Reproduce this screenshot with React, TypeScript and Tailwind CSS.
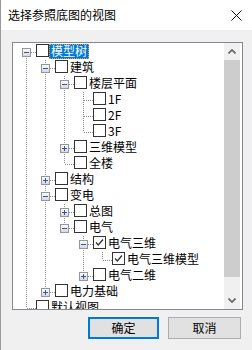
import React from "react";

type Row = { label: string; level: number; exp?: "minus" | "plus"; checked?: boolean; selected?: boolean };

const rows: Row[] = [
  { label: "模型树", level: 0, exp: "minus", selected: true },
  { label: "建筑", level: 1, exp: "minus" },
  { label: "楼层平面", level: 2, exp: "minus" },
  { label: "1F", level: 3 },
  { label: "2F", level: 3 },
  { label: "3F", level: 3 },
  { label: "三维模型", level: 2, exp: "plus" },
  { label: "全楼", level: 2 },
  { label: "结构", level: 1, exp: "plus" },
  { label: "变电", level: 1, exp: "minus" },
  { label: "总图", level: 2, exp: "plus" },
  { label: "电气", level: 2, exp: "minus" },
  { label: "电气三维", level: 3, exp: "minus", checked: true },
  { label: "电气三维模型", level: 4, checked: true },
  { label: "电气二维", level: 3, exp: "plus" },
  { label: "电力基础", level: 1, exp: "plus" },
  { label: "默认视图", level: 0 },
];

function hasNext(i: number): boolean {
  const L = rows[i].level;
  for (let j = i + 1; j < rows.length; j++) {
    if (rows[j].level < L) return false;
    if (rows[j].level === L) return true;
  }
  return false;
}

function ancestorContinues(i: number, c: number): boolean {
  for (let j = i - 1; j >= 0; j--) {
    if (rows[j].level === c) return hasNext(j);
  }
  return false;
}

const LINE = "#8f8f8f";

function Cell({ i, c }: { i: number; c: number }) {
  const row = rows[i];
  const own = c === row.level;
  return (
    <svg width="19" height="16" shapeRendering="crispEdges" className="shrink-0 block">
      <defs>
        <linearGradient id={`g${i}`} x1="0" y1="0" x2="0" y2="1">
          <stop offset="0" stopColor="#ffffff" />
          <stop offset="1" stopColor="#d6d6d6" />
        </linearGradient>
      </defs>
      {!own && ancestorContinues(i, c) && (
        <line x1="9.5" y1="0" x2="9.5" y2="16" stroke={LINE} strokeDasharray="1 1" />
      )}
      {own && (
        <>
          {i !== 0 && <line x1="9.5" y1="0" x2="9.5" y2="8" stroke={LINE} strokeDasharray="1 1" />}
          {hasNext(i) && <line x1="9.5" y1="8" x2="9.5" y2="16" stroke={LINE} strokeDasharray="1 1" />}
          <line x1="10" y1="8.5" x2="19" y2="8.5" stroke={LINE} strokeDasharray="1 1" />
          {row.exp && (
            <>
              <rect x="5.5" y="4.5" width="8" height="8" fill={`url(#g${i})`} stroke="#969696" />
              <line x1="7" y1="8.5" x2="12" y2="8.5" stroke="#2f55a6" />
              {row.exp === "plus" && <line x1="9.5" y1="6" x2="9.5" y2="11" stroke="#2f55a6" />}
            </>
          )}
        </>
      )}
    </svg>
  );
}

function Checkbox({ checked }: { checked?: boolean }) {
  return (
    <div className="w-[13px] h-[13px] shrink-0 border border-[#333333] bg-white flex items-center justify-center">
      {checked && (
        <svg width="11" height="11" viewBox="0 0 11 11">
          <polyline points="2,5.5 4.3,8 9,2.5" fill="none" stroke="#333333" strokeWidth="1.3" />
        </svg>
      )}
    </div>
  );
}

export default function App() {
  return (
    <div className="w-[252px] h-[350px] bg-[#f0f0f0] border-l border-[#9a9a9a] flex flex-col font-['Noto_Sans_CJK_SC','Microsoft_YaHei',sans-serif] text-black overflow-hidden">
      <div className="h-[30px] bg-white flex items-center justify-between pl-[7px] pr-[10px] shrink-0">
        <span className="text-[12px] leading-none">选择参照底图的视图</span>
        <svg width="11" height="11" viewBox="0 0 11 11" className="mt-[1px]">
          <line x1="0.5" y1="0.5" x2="10.5" y2="10.5" stroke="#111" strokeWidth="1" />
          <line x1="10.5" y1="0.5" x2="0.5" y2="10.5" stroke="#111" strokeWidth="1" />
        </svg>
      </div>
      <div className="mt-[12px] ml-[11px] w-[231px] h-[268px] border border-[#828790] bg-white flex shrink-0">
        <div className="flex-1 overflow-hidden pt-[1px] pl-[4px]">
          {rows.map((r, i) => (
            <div key={i} className="h-[16px] flex items-start">
              {Array.from({ length: r.level + 1 }).map((_, c) => (
                <Cell key={c} i={i} c={c} />
              ))}
              <Checkbox checked={r.checked} />
              <span
                className={
                  r.selected
                    ? "ml-[0px] px-[2px] h-[15px] leading-[14px] text-[12px] whitespace-nowrap bg-[#0078d7] text-white outline outline-1 outline-dotted outline-offset-[-1px] outline-[#e8a040]"
                    : "ml-[1px] px-[1px] h-[15px] leading-[14px] text-[12px] whitespace-nowrap"
                }
              >
                {r.label}
              </span>
            </div>
          ))}
        </div>
        <div className="w-[18px] flex shrink-0">
          <div className="w-[16px] flex flex-col bg-[#f0f0f0]">
            <div className="h-[17px] flex items-center justify-center">
              <svg width="8" height="5" viewBox="0 0 8 5">
                <polyline points="0.5,4.5 4,1 7.5,4.5" fill="none" stroke="#606060" strokeWidth="1.6" />
              </svg>
            </div>
            <div className="h-[217px] bg-[#cdcdcd]" />
            <div className="flex-1" />
            <div className="h-[17px] flex items-center justify-center">
              <svg width="8" height="5" viewBox="0 0 8 5">
                <polyline points="0.5,0.5 4,4 7.5,0.5" fill="none" stroke="#606060" strokeWidth="1.6" />
              </svg>
            </div>
          </div>
          <div className="flex-1 bg-white" />
        </div>
      </div>
      <div className="mt-[7px] flex justify-end pr-[11px] gap-[9px]">
        <button className="w-[71px] h-[22px] bg-[#e1e1e1] border-2 border-[#0078d7] text-[12px] leading-none flex items-center justify-center">
          确定
        </button>
        <button className="w-[73px] h-[22px] bg-[#e1e1e1] border border-[#adadad] text-[12px] leading-none flex items-center justify-center">
          取消
        </button>
      </div>
    </div>
  );
}
